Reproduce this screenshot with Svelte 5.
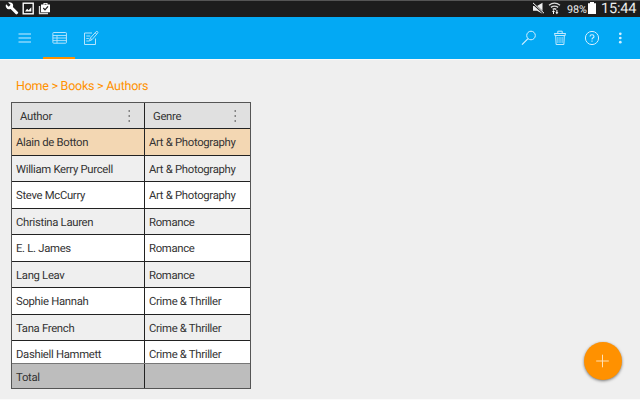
<script>
  const rows = [
    ['Alain de Botton', 'Art & Photography'],
    ['William Kerry Purcell', 'Art & Photography'],
    ['Steve McCurry', 'Art & Photography'],
    ['Christina Lauren', 'Romance'],
    ['E. L. James', 'Romance'],
    ['Lang Leav', 'Romance'],
    ['Sophie Hannah', 'Crime & Thriller'],
    ['Tana French', 'Crime & Thriller'],
    ['Dashiell Hammett', 'Crime & Thriller']
  ];
  let selected = $state(0);
</script>

<div class="screen">
  <header class="status">
    <svg class="left" width="60" height="17" viewBox="0 0 60 17">
      <path d="M6.1 4.2 8.7 6.7 10.6 4.8 8.1 2.5C10 1.7 12 2.4 12.8 4.1c.5 1 .4 2 .1 2.9l5 4.9c.5.5.4 1-.1 1.5l-.7.7c-.5.4-1 .4-1.5 0l-5-5.1C8.800 9.700 7 9 6.200 7.400 5.600 6.300 5.600 5.200 6.100 4.200Z" fill="#fff" />
      <rect x="23.200" y="3.200" width="10" height="10.600" fill="none" stroke="#fff" stroke-width="1.400" />
      <path d="m25 11.500 2.100-2.700 1.500 1.500 2.700-3v4.200Z" fill="#fff" />
      <path d="M39.500 6v7.500H48" fill="none" stroke="#ddd" stroke-width="1.300" />
      <path d="M41 4.500h2.500V3h4v1.500H50v7.800H41Z" fill="#fff" />
      <path d="M44.500 4.300h2" stroke="#1c1c1c" stroke-width=".8" />
      <path d="m43.300 8 1.700 1.900 3-3.500" fill="none" stroke="#1c1c1c" stroke-width="1.200" />
    </svg>
    <div class="right">
      <svg width="34" height="17" viewBox="0 0 34 17">
        <path d="M1 6h4l5.500-3.300v11L5 10.800H1Z" fill="#eee" />
        <path d="m.5 3 11.500 10.500" stroke="#1c1c1c" stroke-width="2" />
        <path d="m1 2.900 11 10.300" stroke="#fff" stroke-width="1" />
        <path d="M17 5.200q5.500-4 11 0M18.900 7.400q3.600-2.600 7.200 0M20.700 9.400q1.800-1.300 3.600 0" fill="none" stroke="#ddd" stroke-width="1.300" />
        <path d="m20 12 1.500-2 1.500 2h-1v2h-1v-2Zm3.400.200h1V10h1v2.200h1l-1.500 2Z" fill="#fff" />
      </svg>
      <span class="percent">98%</span>
      <svg class="battery" width="8" height="17" viewBox="0 0 8 17"><path d="M0 3.300h2V2h4v1.300h2V14H0Z" fill="#fff" /></svg>
      <span class="clock">15:44</span>
    </div>
  </header>

  <nav class="toolbar">
    <button class="menu" aria-label="Menu">
      <svg width="14" height="12" viewBox="0 0 14 12"><path d="M.5 2h12.500M.5 6h12.500M.5 10h12.500" stroke="#ccecff" stroke-width="1" /></svg>
    </button>
    <button class="tab" aria-label="Table">
      <svg width="16" height="14" viewBox="0 0 16 14"><rect x=".9" y="1.500" width="13.500" height="10.700" rx=".7" fill="none" stroke="#b5e4fd" /><path d="M1 4.500h13.500M1 7h13.500M1 9.600h13.500M5 4.500v7.700" fill="none" stroke="#b5e4fd" stroke-width=".9" /></svg>
    </button>
    <button class="edit" aria-label="Edit">
      <svg width="16" height="16" viewBox="0 0 16 16"><g fill="none" stroke="#b5e4fd"><path d="M9 3H1.500v11.500h11V8.500" /><path d="M3.300 6h4M3.300 8.500h2.500M3.300 11h3" stroke-width=".9" /><path d="m6.500 10.800.8-2.700 5.800-6.400q.8-.7 1.500 0t0 1.500L9 9.700Zm.8-2.700L9 9.700M12 2.700l1.800 1.600" /></g></svg>
    </button>
    <span class="grow"></span>
    <button class="search" aria-label="Search">
      <svg width="16" height="16" viewBox="0 0 16 16"><circle cx="10" cy="5.500" r="4.300" fill="none" stroke="#d4efff" /><path d="m7 8.700-6 6" stroke="#d4efff" stroke-width="1.200" /></svg>
    </button>
    <button class="trash" aria-label="Delete">
      <svg width="14" height="16" viewBox="0 0 14 16"><g fill="none" stroke="#c4eaff"><path d="M1.200 3.500h11.600M4.800 3.300V1.200h4.400v2.100M1.800 3.500v2h10.400v-2M2.700 5.500l.4 9h7.800l.4-9" /><path d="M4.900 7v6M7 7v6M9.100 7v6" stroke-width=".8" /></g></svg>
    </button>
    <button class="help" aria-label="Help">
      <svg width="16" height="16" viewBox="0 0 16 16"><circle cx="8" cy="8" r="6.600" fill="none" stroke="#d4efff" /><path d="M6 6.500Q6 4.700 8 4.700t2 1.700Q10 7.300 8.800 8 8 8.500 8 9.500M8 10.600v1.200" fill="none" stroke="#d4efff" stroke-width="1.100" /></svg>
    </button>
    <button class="more" aria-label="More">
      <svg width="4" height="12" viewBox="0 0 4 12"><g fill="#d4efff"><circle cx="2.300" cy="1.800" r="1.350" /><circle cx="2.300" cy="6" r="1.350" /><circle cx="2.300" cy="10.200" r="1.350" /></g></svg>
    </button>
  </nav>

  <main>
    <div class="crumbs">Home &gt; Books &gt; Authors</div>
    <section class="grid">
      <div class="row head">
        {#each ['Author', 'Genre'] as title}
          <div class="cell">
            <span>{title}</span>
            <svg width="4" height="14" viewBox="0 0 4 14"><path d="M1.500 2H3M1.500 7H3M1.500 12H3" stroke="#666" stroke-width="1.400" /></svg>
          </div>
        {/each}
      </div>
      <div class="body">
        {#each rows as [author, genre], i}
          <div class="row" class:selected={i === selected} class:alt={i % 2 === 1}>
            <div class="cell">{author}</div>
            <div class="cell">{genre}</div>
          </div>
        {/each}
      </div>
      <div class="row total"><div class="cell">Total</div><div class="cell"></div></div>
    </section>
  </main>
  <button class="fab" aria-label="Add">
    <svg width="14" height="14" viewBox="0 0 14 14"><path d="M6.500 .7v12.600M.2 7h12.600" stroke="#ffe1b5" stroke-width="1" /></svg>
  </button>
</div>

<style>
  :global(body) { margin: 0; }
  .screen { position: relative; width: 640px; height: 400px; overflow: hidden; box-sizing: border-box; display: flex; flex-direction: column; font-family: Roboto, sans-serif; text-rendering: geometricPrecision; background: #efefef; border-bottom: 1px solid #fafafa; }
  button { border: 0; padding: 0; background: none; display: flex; align-items: center; justify-content: center; }
  svg { display: block; flex: none; }
  .status { height: 17px; flex: none; display: flex; justify-content: space-between; background: #1d1d1d; color: #eee; box-shadow: inset 0 1px #555; }
  .right { display: flex; align-items: center; padding-right: 3px; }
  .percent { font-size: 10.800px; width: 22px; padding-top: 2px; text-align: center; white-space: nowrap; }
  .battery { margin: 0 5px 0 0; }
  .clock { width: 36px; font-size: 14.500px; letter-spacing: -.2px; line-height: 17px; white-space: nowrap; }
  .toolbar { height: 42px; flex: none; display: flex; align-items: stretch; background: #03a9f4; box-shadow: 0 1px #f9f9f9; }
  .menu { width: 14px; margin-left: 18px; }
  .tab { width: 32px; margin-left: 11px; padding-left: 1px; box-shadow: inset 0 -2px #ff9100; }
  .edit { width: 16px; margin-left: 8px; }
  .grow { flex: 1; }
  .search { width: 16px; }
  .trash { width: 14px; margin-left: 16px; }
  .help { width: 16px; margin-left: 17px; }
  .more { width: 4px; margin: 0 18px 0 18px; }
  main { padding: 18px 0 0 11px; }
  .crumbs { height: 25px; padding-left: 5px; line-height: 19px; font-size: 12.500px; letter-spacing: -.25px; color: #ff9100; white-space: nowrap; }
  .grid { width: 240px; height: 287px; box-sizing: border-box; border: 1px solid #555; display: flex; flex-direction: column; color: #333; font-size: 11.300px; letter-spacing: -.3px; }
  .row { display: flex; height: 26.500px; flex: none; box-sizing: border-box; border-bottom: 1px solid #222; background: #fff; }
  .cell { flex: 1; box-sizing: border-box; padding: 2px 0 0 4px; display: flex; align-items: center; white-space: nowrap; }
  .cell:first-child { flex: 0 0 133px; border-right: 1px solid #222; }
  .head { height: 26px; background: #e0e0e0; }
  .head .cell { padding: 2px 13px 0 8px; justify-content: space-between; }
  .head svg { margin-top: -2px; }
  .body { height: 234px; flex: none; overflow: hidden; }
  .alt { background: #efefef; }
  .selected { background: #f3d7b3; }
  .total { flex: 1; height: auto; background: #bdbdbd; border-top: 1px solid #777; border-bottom: 0; }
  .fab { position: absolute; left: 584px; top: 342px; width: 38px; height: 38px; border-radius: 50%; background: #ff9100; box-shadow: 0 1px 3px rgba(0, 0, 0, .5); }
</style>
